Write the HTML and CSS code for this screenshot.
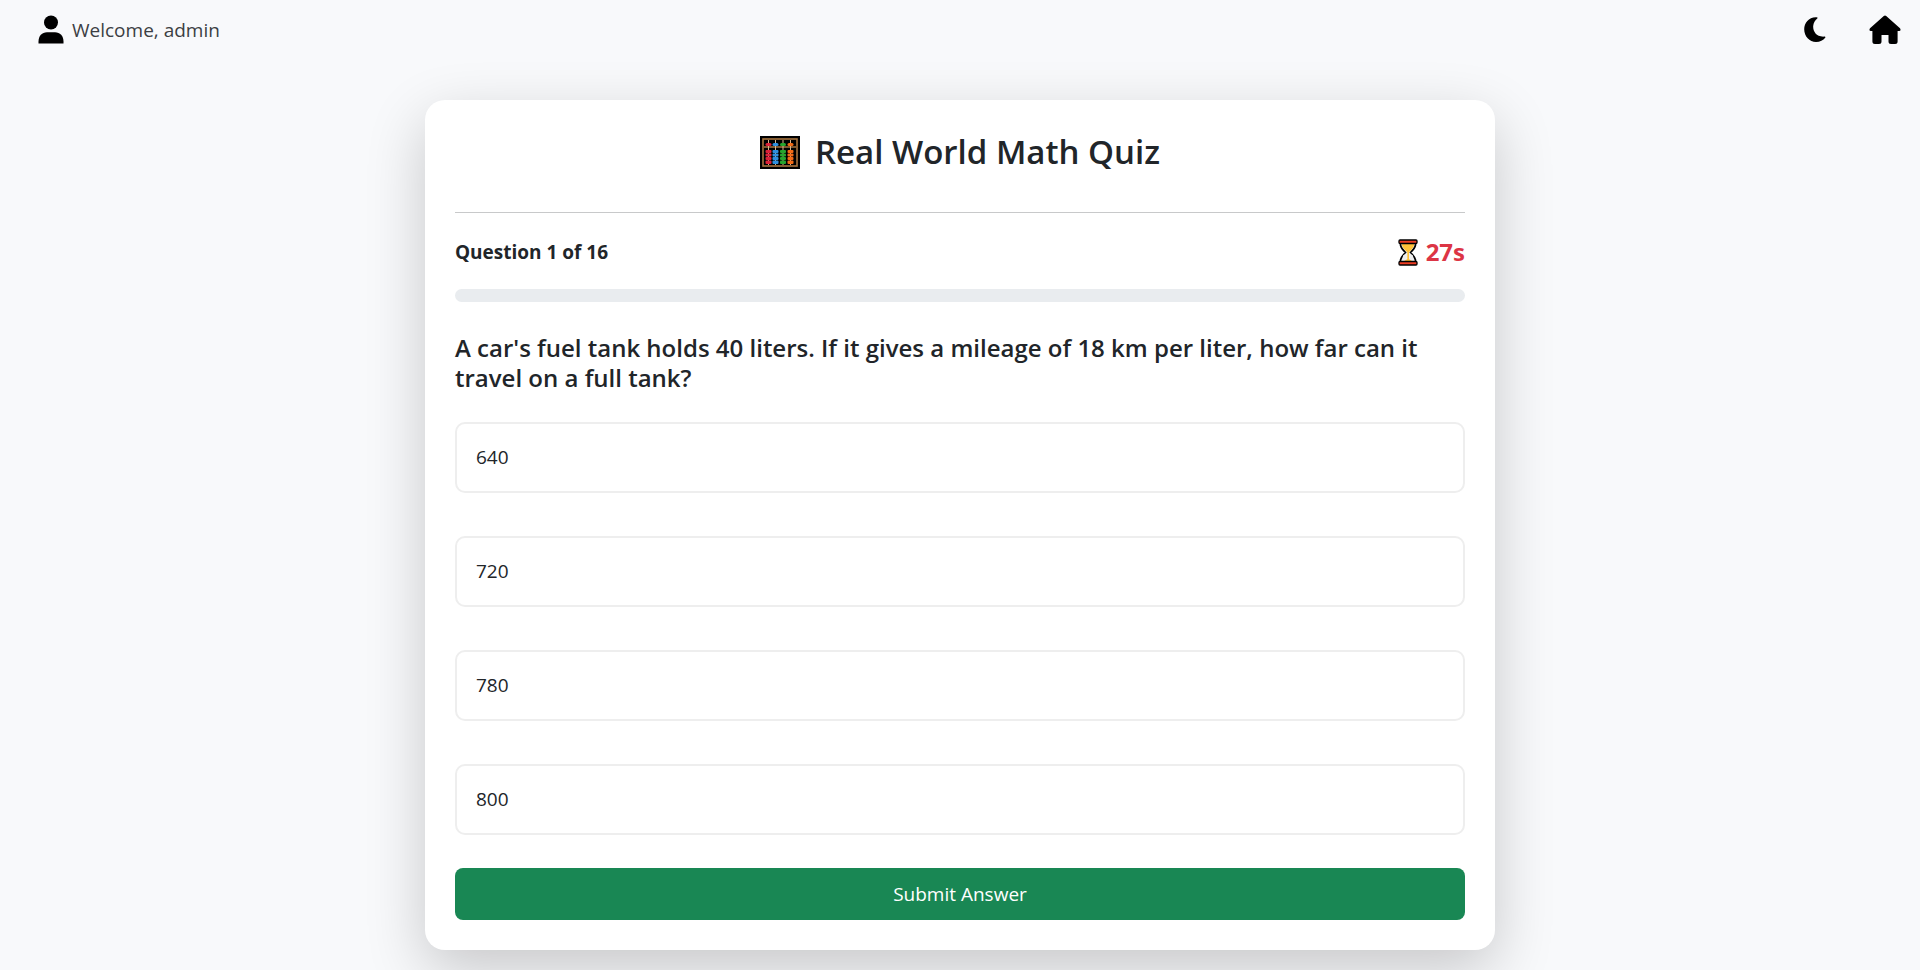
FILE: index.html
```html
<!DOCTYPE html>
<html lang="en">
<head>
<meta charset="utf-8">
<meta name="viewport" content="width=device-width, initial-scale=1">
<title>Real World Math Quiz</title>
<link rel="stylesheet" href="styles.css">
</head>
<body>
<header class="topbar">
  <div class="user">
    <svg class="user-icon" viewBox="0 0 26 30" aria-hidden="true"><circle cx="13" cy="7.500" r="7"/><path d="M.5 28.500V26.500C.5 21 4 17.300 9 17.300H17C22 17.300 25.500 21 25.500 26.500V28.500Z"/></svg>
    <span>Welcome, admin</span>
  </div>
  <nav class="actions">
    <button class="icon-button" type="button" aria-label="Toggle dark mode">
      <svg class="moon-icon" viewBox="0 0 24 26" aria-hidden="true"><path d="M12.500.2C5 -.2.2 5.700.2 12.300C.2 19.500 5.500 25 12 25C16 25 19.300 23.500 21.200 20.800C21.700 20.100 21.300 19.500 20.400 19.600C12 20.200 8.800 14 9.200 9C9.500 5.700 11 3.200 13.300 1.400C13.900.8 13.600.3 12.500.2Z"/></svg>
    </button>
    <a class="icon-button" href="#" aria-label="Home">
      <svg class="home-icon" viewBox="0 0 34 30" aria-hidden="true"><path d="M15.800.9Q17 .2 18.200.9L32 13.300Q33.400 15.700 31.200 16.100H29.600V26.500Q29.600 29 27.100 29H23Q20.500 29 20.500 26.500V20H13.500V26.500Q13.500 29 11 29H6.900Q4.400 29 4.400 26.500V16.100H2.800Q.6 15.700 2 13.300Z"/></svg>
    </a>
  </nav>
</header>
<main class="quiz">
  <h1 class="title">
    <svg class="abacus" viewBox="0 0 40 33" aria-hidden="true">
      <rect width="40" height="33" fill="#000"/>
      <rect x="3" y="3" width="34" height="27" fill="none" stroke="#a8743f" stroke-width="1.600"/>
      <path d="M4 11H36" stroke="#a8743f" stroke-width="1.500"/>
      <path d="M8.500 4V29M15.500 4V29M23 4V29M30.500 4V29" stroke="#d9b48c"/>
      <g fill="#dc2038"><rect x="5.500" y="7" width="6" height="3" rx="1.500"/><rect x="5.500" y="14" width="6" height="3" rx="1"/><rect x="5.500" y="17.500" width="6" height="3" rx="1"/><rect x="5.500" y="21" width="6" height="3" rx="1"/><rect x="5.500" y="24.500" width="6" height="3.500" rx="1"/></g>
      <g fill="#2f8fe0"><rect x="12.500" y="7" width="6" height="3" rx="1.500"/><rect x="12.500" y="14" width="6" height="3" rx="1"/><rect x="12.500" y="17.500" width="6" height="3" rx="1"/><rect x="12.500" y="21" width="6" height="3" rx="1"/><rect x="12.500" y="24.500" width="6" height="3.500" rx="1"/></g>
      <g fill="#25a52d"><rect x="20" y="7" width="6" height="3" rx="1.500"/><rect x="20" y="14" width="6" height="3" rx="1"/><rect x="20" y="17.500" width="6" height="3" rx="1"/><rect x="20" y="21" width="6" height="3" rx="1"/><rect x="20" y="24.500" width="6" height="3.500" rx="1"/></g>
      <g fill="#f36b16"><rect x="27.500" y="7" width="6" height="3" rx="1.500"/><rect x="27.500" y="14" width="6" height="3" rx="1"/><rect x="27.500" y="17.500" width="6" height="3" rx="1"/><rect x="27.500" y="21" width="6" height="3" rx="1"/><rect x="27.500" y="24.500" width="6" height="3.500" rx="1"/></g>
    </svg>
    <span>Real World Math Quiz</span>
  </h1>
  <hr class="divider">
  <div class="status">
    <span>Question 1 of 16</span>
    <span class="timer">
      <svg class="hourglass" viewBox="0 0 20 27" aria-hidden="true">
        <path d="M2.500 3V6Q3 9 7.500 13.500Q3 18 2.500 21V24H17.500V21Q17 18 12.500 13.500Q17 9 17.500 6V3Z" fill="#f1f1f1" stroke="#000" stroke-width="1.700"/>
        <path d="M3.700 4.500H16.300Q16.200 8.500 11 13.300V20L15.500 23H4.500L9.300 20V13.300Q3.800 8.500 3.700 4.500Z" fill="#ffc23a"/>
        <path d="M5 16.500L9 14V20L4.500 22ZM15 16.500L11 14V20L15.500 22Z" fill="#eee"/>
        <rect x="1" y="1" width="18" height="3.500" rx="1" fill="#ee3d22" stroke="#000" stroke-width="1.300"/>
        <rect x="1" y="22.500" width="18" height="3.500" rx="1" fill="#ee3d22" stroke="#000" stroke-width="1.300"/>
      </svg>
      <span>27s</span>
    </span>
  </div>
  <div class="progress" role="progressbar" aria-label="Quiz progress" aria-valuenow="0" aria-valuemin="0" aria-valuemax="100"></div>
  <form class="question">
    <h2 class="question-text" id="question">A car's fuel tank holds 40 liters. If it gives a mileage of 18 km per liter, how far can it travel on a full tank?</h2>
    <div class="options" role="radiogroup" aria-labelledby="question">
      <label class="option"><input class="option-input" type="radio" name="answer" value="640">640</label>
      <label class="option"><input class="option-input" type="radio" name="answer" value="720">720</label>
      <label class="option"><input class="option-input" type="radio" name="answer" value="780">780</label>
      <label class="option"><input class="option-input" type="radio" name="answer" value="800">800</label>
    </div>
    <button class="submit" type="submit">Submit Answer</button>
  </form>
</main>
</body>
</html>
```
FILE: styles.css
```css
* { box-sizing: border-box; }

body {
  margin: 0;
  min-height: 100vh;
  overflow-x: hidden;
  background: #f8f9fb;
  color: #212529;
  font-family: "Segoe UI", "Open Sans", "Noto Sans", sans-serif;
  font-size: 19px;
  line-height: 30px;
}

.topbar {
  display: flex;
  align-items: center;
  justify-content: space-between;
  height: 60px;
  padding: 0 18px 0 38px;
}

.user { display: flex; align-items: center; gap: 8px; color: #3c3f43; }
.user-icon { width: 26px; height: 30px; fill: #000; }
.actions { display: flex; align-items: center; gap: 40px; }

.icon-button {
  display: flex;
  padding: 0;
  border: 0;
  background: none;
  fill: #000;
  cursor: pointer;
}
.moon-icon { width: 24px; height: 26px; }
.home-icon { width: 34px; height: 30px; }

.quiz {
  width: calc(100% - 40px);
  max-width: 1070px;
  margin: 40px auto 20px;
  padding: 30px;
  border-radius: 20px;
  background: #fff;
  box-shadow: 0 20px 60px rgba(0, 0, 0, 0.2);
}

.title {
  display: flex;
  align-items: center;
  justify-content: center;
  gap: 15px;
  margin: 0;
  font-size: 33px;
  font-weight: 600;
  line-height: 44px;
}
.abacus { width: 40px; height: 33px; }

.divider {
  height: 1px;
  margin: 38px 0 24px;
  border: 0;
  background: #c8c9ca;
}

.status {
  display: flex;
  align-items: center;
  justify-content: space-between;
  font-weight: 700;
}
.timer { display: flex; align-items: center; gap: 8px; color: #dc3545; font-size: 24px; }
.hourglass { width: 20px; height: 27px; }

.progress {
  height: 13px;
  margin: 22px 0 31px;
  border-radius: 7px;
  background: #e9ecef;
}

.question-text {
  margin: 0 0 29px;
  font-size: 24px;
  font-weight: 600;
  line-height: 30px;
}

.options { display: grid; gap: 43px; }

.option {
  position: relative;
  display: block;
  padding: 19px;
  border: 2px solid #eee;
  border-radius: 10px;
  line-height: 29px;
  cursor: pointer;
}
.option-input { position: absolute; opacity: 0; }
.option:focus-within { border-color: #198754; }

.submit {
  display: block;
  width: 100%;
  margin-top: 33px;
  padding: 11px;
  border: 0;
  border-radius: 8px;
  background: #198754;
  color: #fff;
  font: inherit;
  cursor: pointer;
}
```
